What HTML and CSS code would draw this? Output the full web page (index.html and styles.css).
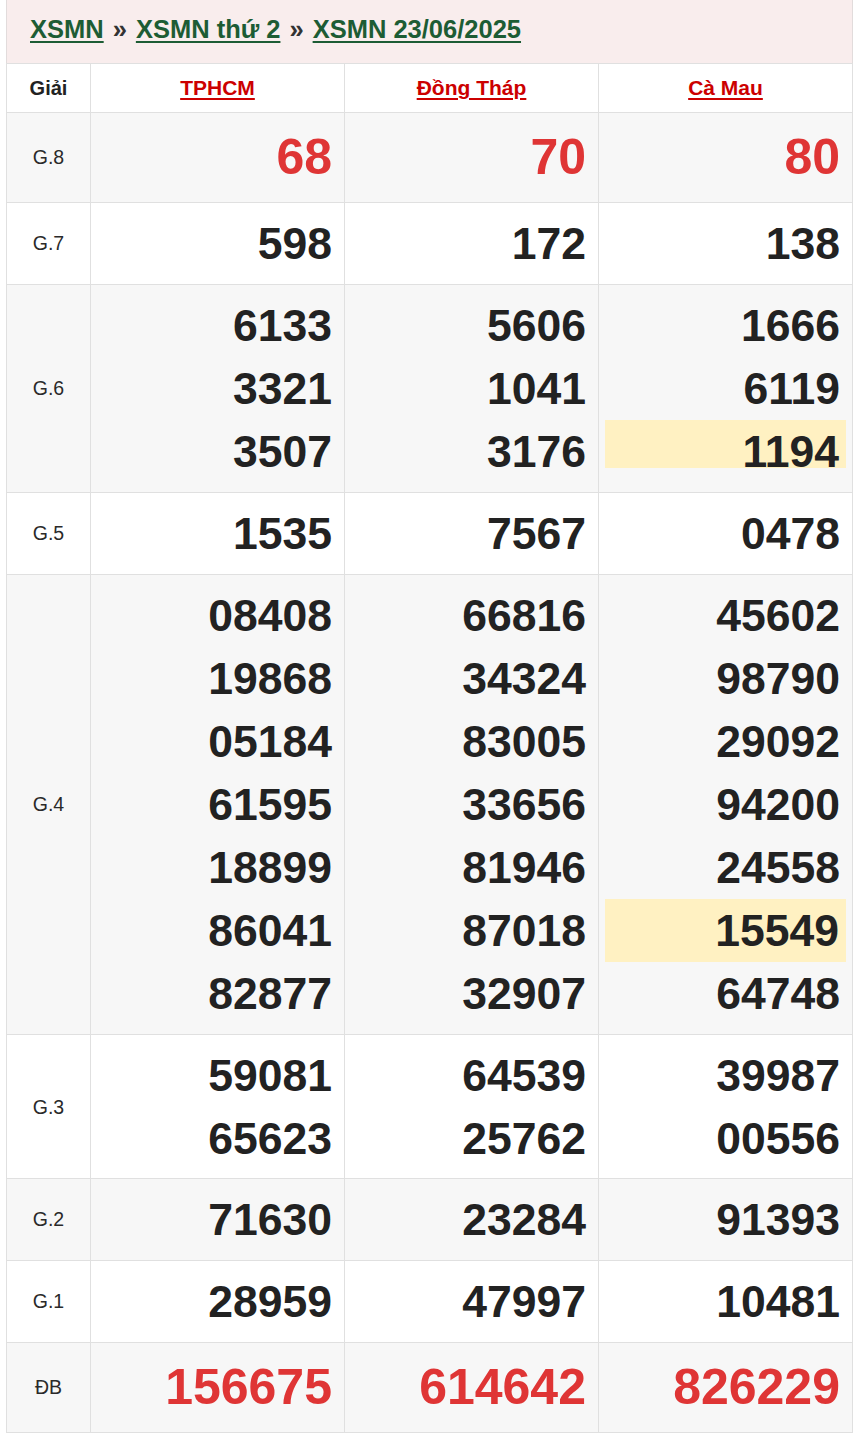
FILE: index.html
```html
<!DOCTYPE html>
<html lang="vi">
<head>
<meta charset="utf-8">
<title>XSMN 23/06/2025</title>
<link rel="stylesheet" href="styles.css">
</head>
<body>
<div class="box">
  <div class="crumbs">
    <a href="#">XSMN</a><span class="sep">»</span><a href="#">XSMN thứ 2</a><span class="sep">»</span><a href="#">XSMN 23/06/2025</a>
  </div>
  <table class="kq">
    <colgroup><col class="c-label"><col><col><col></colgroup>
    <thead>
      <tr><th class="lbl">Giải</th><th><a href="#">TPHCM</a></th><th><a href="#">Đồng Tháp</a></th><th><a href="#">Cà Mau</a></th></tr>
    </thead>
    <tbody>
      <tr class="alt"><td class="lbl">G.8</td><td><div class="n big">68</div></td><td><div class="n big">70</div></td><td><div class="n big">80</div></td></tr>
      <tr><td class="lbl">G.7</td><td><div class="n">598</div></td><td><div class="n">172</div></td><td><div class="n">138</div></td></tr>
      <tr class="alt"><td class="lbl">G.6</td>
        <td><div class="n">6133</div><div class="n">3321</div><div class="n">3507</div></td>
        <td><div class="n">5606</div><div class="n">1041</div><div class="n">3176</div></td>
        <td><div class="n">1666</div><div class="n">6119</div><div class="n hl-short">1194</div></td></tr>
      <tr><td class="lbl">G.5</td><td><div class="n">1535</div></td><td><div class="n">7567</div></td><td><div class="n">0478</div></td></tr>
      <tr class="alt"><td class="lbl">G.4</td>
        <td><div class="n">08408</div><div class="n">19868</div><div class="n">05184</div><div class="n">61595</div><div class="n">18899</div><div class="n">86041</div><div class="n">82877</div></td>
        <td><div class="n">66816</div><div class="n">34324</div><div class="n">83005</div><div class="n">33656</div><div class="n">81946</div><div class="n">87018</div><div class="n">32907</div></td>
        <td><div class="n">45602</div><div class="n">98790</div><div class="n">29092</div><div class="n">94200</div><div class="n">24558</div><div class="n hl">15549</div><div class="n">64748</div></td></tr>
      <tr class="tight"><td class="lbl">G.3</td>
        <td><div class="n">59081</div><div class="n">65623</div></td>
        <td><div class="n">64539</div><div class="n">25762</div></td>
        <td><div class="n">39987</div><div class="n">00556</div></td></tr>
      <tr class="alt"><td class="lbl">G.2</td><td><div class="n">71630</div></td><td><div class="n">23284</div></td><td><div class="n">91393</div></td></tr>
      <tr><td class="lbl">G.1</td><td><div class="n">28959</div></td><td><div class="n">47997</div></td><td><div class="n">10481</div></td></tr>
      <tr class="alt"><td class="lbl">ĐB</td><td><div class="n big">156675</div></td><td><div class="n big">614642</div></td><td><div class="n big">826229</div></td></tr>
    </tbody>
  </table>
</div>
</body>
</html>
```
FILE: styles.css
```css
html, body {
  margin: 0;
  padding: 0;
  background: #fff;
}
body {
  font-family: "Liberation Sans", Arial, sans-serif;
  color: #222;
}
.box {
  margin-left: 6px;
  width: 847px;
}
.crumbs {
  box-sizing: border-box;
  height: 63px;
  background: #f9eded;
  border-left: 1px solid #e2dcdc;
  border-right: 1px solid #e2dcdc;
  padding: 14px 0 0 23px;
  display: flex;
  align-items: baseline;
  gap: 9px;
  font-size: 25.5px;
  font-weight: bold;
  line-height: 30px;
}
.crumbs a {
  color: #1d5c34;
  text-decoration: underline;
  text-decoration-thickness: 2px;
  text-underline-offset: 3px;
}
.crumbs .sep {
  color: #333;
}
.kq {
  width: 847px;
  border-collapse: collapse;
  table-layout: fixed;
}
.kq col.c-label {
  width: 84px;
}
.kq th, .kq td {
  border: 1px solid #e0e0e0;
  padding: 9px 6px;
}
.kq tr.tight td {
  padding-bottom: 8px;
}
.kq th {
  height: 30px;
  padding: 9px 6px;
  font-size: 20px;
  font-weight: bold;
  line-height: 30px;
  text-align: center;
  color: #222;
}
.kq th a {
  color: #cc0000;
  text-decoration: underline;
  text-decoration-thickness: 2px;
  text-underline-offset: 3px;
  font-size: 21px;
}
.kq tr.alt td {
  background: #f7f7f7;
}
.kq td.lbl {
  text-align: center;
  font-size: 19.5px;
  color: #2a2a2a;
}
.n {
  font-size: 44.5px;
  line-height: 63px;
  height: 63px;
  font-weight: bold;
  text-align: right;
  padding-right: 6px;
  color: #222;
}
.n.big {
  font-size: 50px;
  line-height: 71px;
  height: 71px;
  color: #df3535;
}
.n.hl {
  background: #fff1c2;
  padding-right: 7px;
}
.n.hl-short {
  background: linear-gradient(#fff1c2, #fff1c2) top / 100% 48px no-repeat;
  padding-right: 7px;
}
```
